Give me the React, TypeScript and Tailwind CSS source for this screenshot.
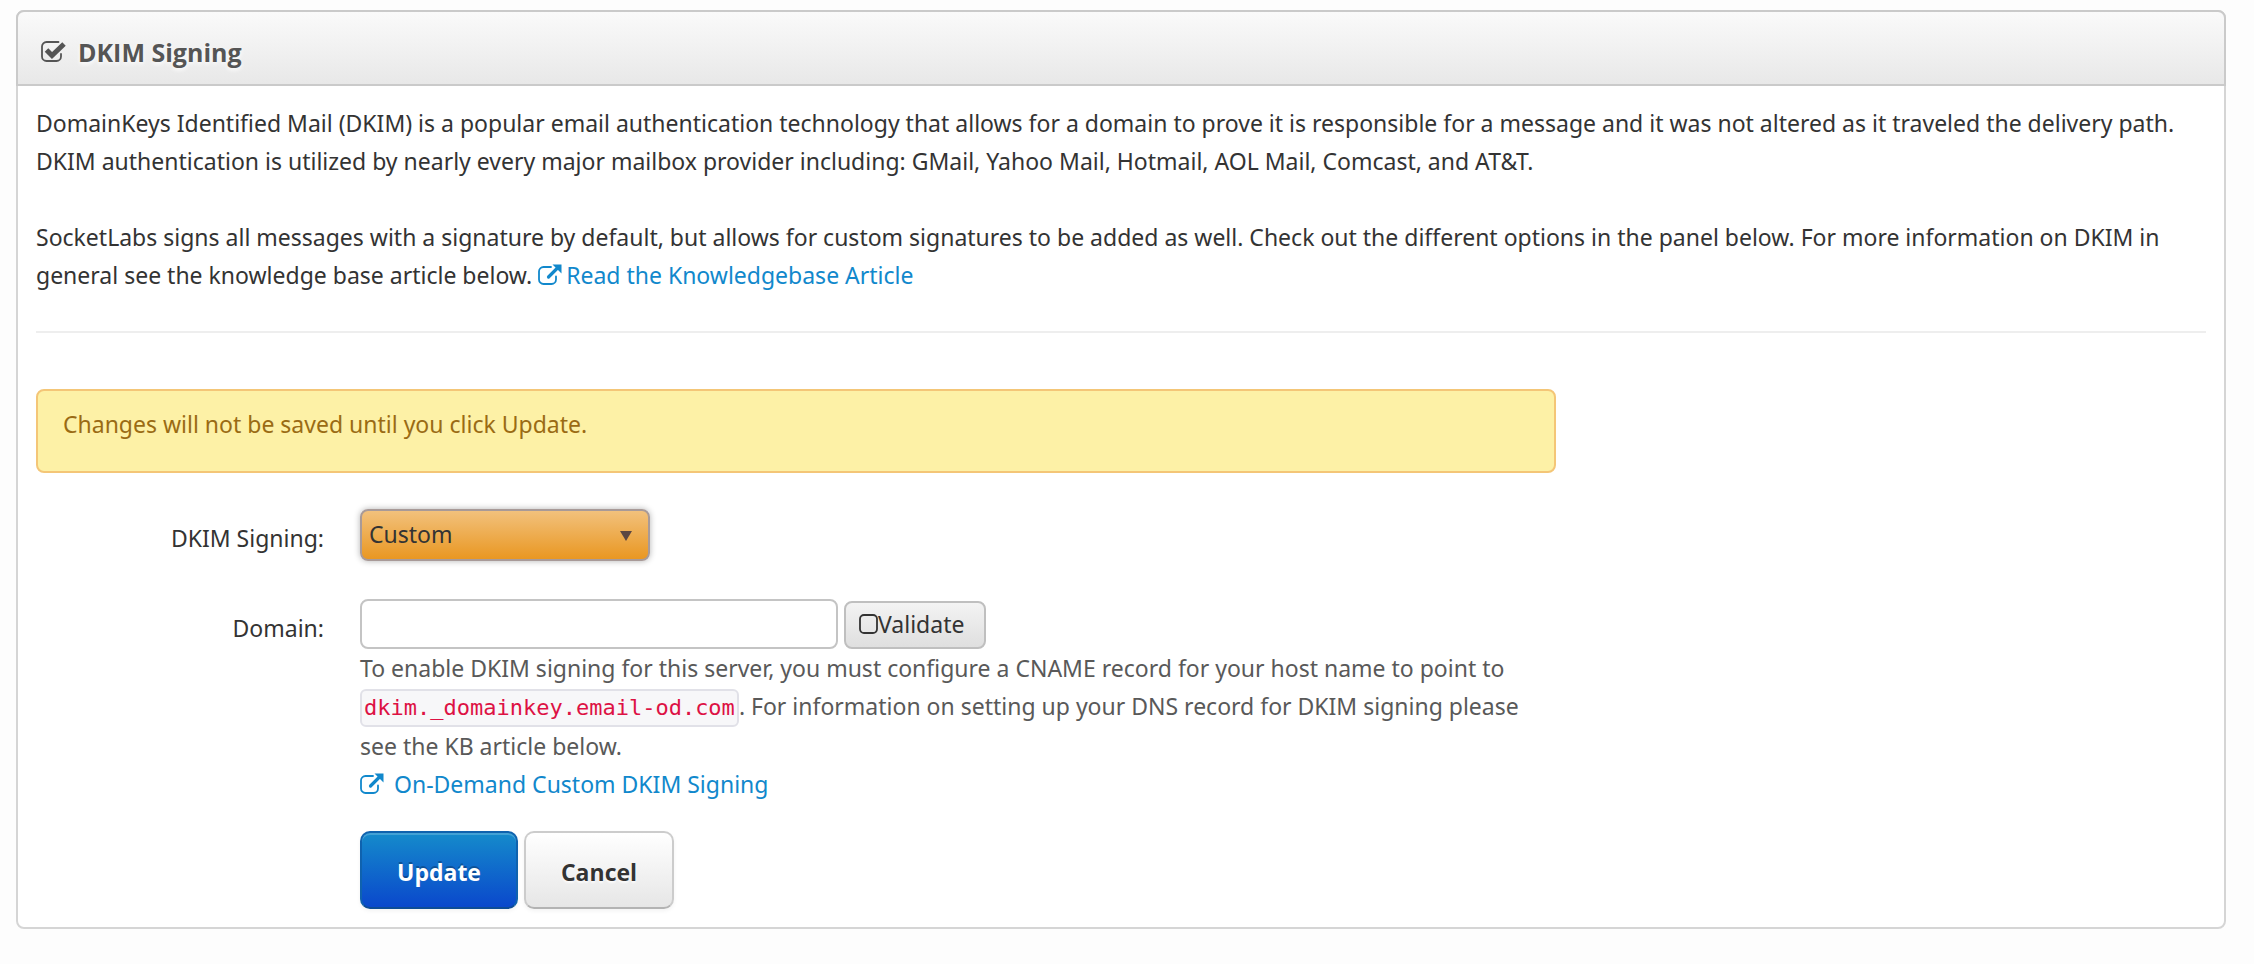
import { useState } from "react"
import { clsx } from "clsx"
import type { ReactNode } from "react"

type IconProps = {
  className?: string
}

const CheckIcon = ({ className }: IconProps) => (
  <svg viewBox="0 0 26 24" className={className} fill="none" aria-hidden="true">
    <path
      d="M18.500 2H6.500A4.500 4.500 0 0 0 2 6.500v10A4.500 4.500 0 0 0 6.500 21h10a4.500 4.500 0 0 0 4.500-4.500v-2.500"
      stroke="currentColor"
      strokeWidth="1.800"
      strokeLinecap="round"
    />
    <path d="M6.500 10l5.500 5.500L24 4" stroke="currentColor" strokeWidth="5" />
  </svg>
)

const ExternalLinkIcon = ({ className }: IconProps) => (
  <svg viewBox="0 0 24 22" className={className} fill="none" aria-hidden="true">
    <path
      d="M13 3H5.500A4.500 4.500 0 0 0 1 7.500v8A4.500 4.500 0 0 0 5.500 20h8a4.500 4.500 0 0 0 4.500-4.500v-3"
      stroke="currentColor"
      strokeWidth="1.800"
      strokeLinecap="round"
    />
    <path d="M10.500 13L20 3.500" stroke="currentColor" strokeWidth="3.200" strokeLinecap="round" />
    <path d="M14.500 0.500H23.500v9z" fill="currentColor" />
  </svg>
)

const EmptyBoxIcon = ({ className }: IconProps) => (
  <svg viewBox="0 0 19 20" className={className} fill="none" aria-hidden="true">
    <rect x="1" y="1" width="17" height="18" rx="4" stroke="currentColor" strokeWidth="1.800" />
  </svg>
)

type FormButtonProps = {
  primary?: boolean
  type?: "button" | "submit"
  children: ReactNode
}

const FormButton = ({ primary, type = "button", children }: FormButtonProps) => (
  <button
    type={type}
    className={clsx(
      "h-[78px] rounded-[10px] border-2 px-[35px] pt-1 font-['Open_Sans',sans-serif] text-[23px] leading-[38px] font-bold",
      primary
        ? "border-[#0f62ae] border-b-[#0d4c96] bg-linear-to-b/srgb from-[#158bcb] to-[#0a48cc] text-white shadow-[inset_0_2px_0_rgba(255,255,255,0.2),0_2px_4px_rgba(0,0,0,0.05)] [text-shadow:0_-2px_0_rgba(0,0,0,0.25)]"
        : "border-[#ccc] border-b-[#b3b3b3] bg-linear-to-b/srgb from-white to-[#e6e6e6] text-[#333] shadow-[0_2px_4px_rgba(0,0,0,0.05)] [text-shadow:0_2px_2px_rgba(255,255,255,0.75)]"
    )}
  >
    {children}
  </button>
)

export default function App() {
  const [signing, setSigning] = useState("custom")
  const [domain, setDomain] = useState("")

  return (
    <main className="min-h-screen bg-[#fdfdfd] pt-[10px] pr-7 pb-9 pl-4 font-['Noto_Sans',sans-serif] text-[23px] leading-[38px] text-[#333]">
      <section className="rounded-lg border-2 border-[#d5d5d5] bg-white">
        <header className="-mx-0.5 -mt-0.5 flex h-[76px] items-center gap-3 rounded-t-lg border-2 border-[#cacaca] bg-linear-to-b/srgb from-[#fafafa] to-[#e8e8e8] pt-2 pl-[22px] text-[#555]">
          <CheckIcon className="h-6 w-[26px]" />
          <h1 className="font-['Open_Sans',sans-serif] text-[25px] font-bold [text-shadow:0_2px_4px_#fff]">
            DKIM Signing
          </h1>
        </header>

        <div className="px-[18px] pt-[18px] pb-[18px]">
          <p>
            DomainKeys Identified Mail (DKIM) is a popular email authentication technology that allows for a domain to
            prove it is responsible for a message and it was not altered as it traveled the delivery path. DKIM
            authentication is utilized by nearly every major mailbox provider including: GMail, Yahoo Mail, Hotmail, AOL
            Mail, Comcast, and AT&amp;T.
          </p>
          <p className="mt-[38px]">
            SocketLabs signs all messages with a signature by default, but allows for custom signatures to be added as
            well. Check out the different options in the panel below. For more information on DKIM in general see the
            knowledge base article below.{" "}
            <a href="#knowledgebase" className="text-[#1188cc]">
              <ExternalLinkIcon className="mr-1 inline h-[22px] w-6 align-[-2px]" />
              Read the Knowledgebase Article
            </a>
          </p>

          <hr className="mt-[37px] mb-14 border-t-2 border-[#eee]" />

          <div
            role="alert"
            className="h-[84px] w-[1520px] max-w-full rounded-lg border-2 border-[#f4c677] bg-[#fdf1a6] px-[25px] py-[14px] text-[#9a6b14]"
          >
            Changes will not be saved until you click Update.
          </div>

          <form className="mt-9" onSubmit={(event) => event.preventDefault()}>
            <div className="flex gap-9">
              <label htmlFor="signing" className="w-72 pt-[10px] text-right">
                DKIM Signing:
              </label>
              <div className="relative h-[52px] w-[290px]">
                <select
                  id="signing"
                  value={signing}
                  onChange={(event) => setSigning(event.target.value)}
                  className="h-full w-full appearance-none rounded-lg border-2 border-[#a89a98] bg-linear-to-b/srgb from-[#f2c17c] to-[#e99722] px-[7px] pb-0.5 shadow-[0_0_6px_rgba(0,0,0,0.3)]"
                >
                  <option value="custom">Custom</option>
                  <option value="default">Default</option>
                </select>
                <svg
                  viewBox="0 0 12 10"
                  className="pointer-events-none absolute top-[22px] right-[18px] h-[10px] w-3 fill-[#5c4742]"
                  aria-hidden="true"
                >
                  <path d="M0 0h12L6 10z" />
                </svg>
              </div>
            </div>

            <div className="mt-[38px] flex gap-9">
              <label htmlFor="domain" className="w-72 pt-[10px] text-right">
                Domain:
              </label>
              <div className="w-[1180px] text-[#595959]">
                <div className="flex items-end gap-1.5">
                  <input
                    id="domain"
                    type="text"
                    value={domain}
                    onChange={(event) => setDomain(event.target.value)}
                    className="h-[50px] w-[478px] rounded-lg border-2 border-[#c4c4c4] bg-white px-2"
                  />
                  <button
                    type="button"
                    className="flex h-12 w-[142px] items-center rounded-lg border-2 border-[#bfbfbf] bg-linear-to-b/srgb from-[#f3f3f3] to-[#dfdfdf] pb-0.5 pl-[13px] text-[#333]"
                  >
                    <EmptyBoxIcon className="h-5 w-[19px]" />
                    Validate
                  </button>
                </div>
                <p>
                  To enable DKIM signing for this server, you must configure a CNAME record for your host name to point
                  to{" "}
                  <code className="inline-block rounded-md border-2 border-[#e1e1e8] bg-[#f7f7f9] px-0.5 font-['DejaVu_Sans_Mono',monospace] text-[22px] leading-[34px] text-[#dd1144]">
                    dkim._domainkey.email-od.com
                  </code>
                  . For information on setting up your DNS record for DKIM signing please see the KB article below.
                </p>
                <a href="#custom-dkim" className="flex items-center gap-[10px] text-[#1188cc]">
                  <ExternalLinkIcon className="h-[22px] w-6" />
                  On-Demand Custom DKIM Signing
                </a>
              </div>
            </div>

            <div className="mt-7 ml-[324px] flex gap-1.5">
              <FormButton primary type="submit">
                Update
              </FormButton>
              <FormButton>Cancel</FormButton>
            </div>
          </form>
        </div>
      </section>
    </main>
  )
}
